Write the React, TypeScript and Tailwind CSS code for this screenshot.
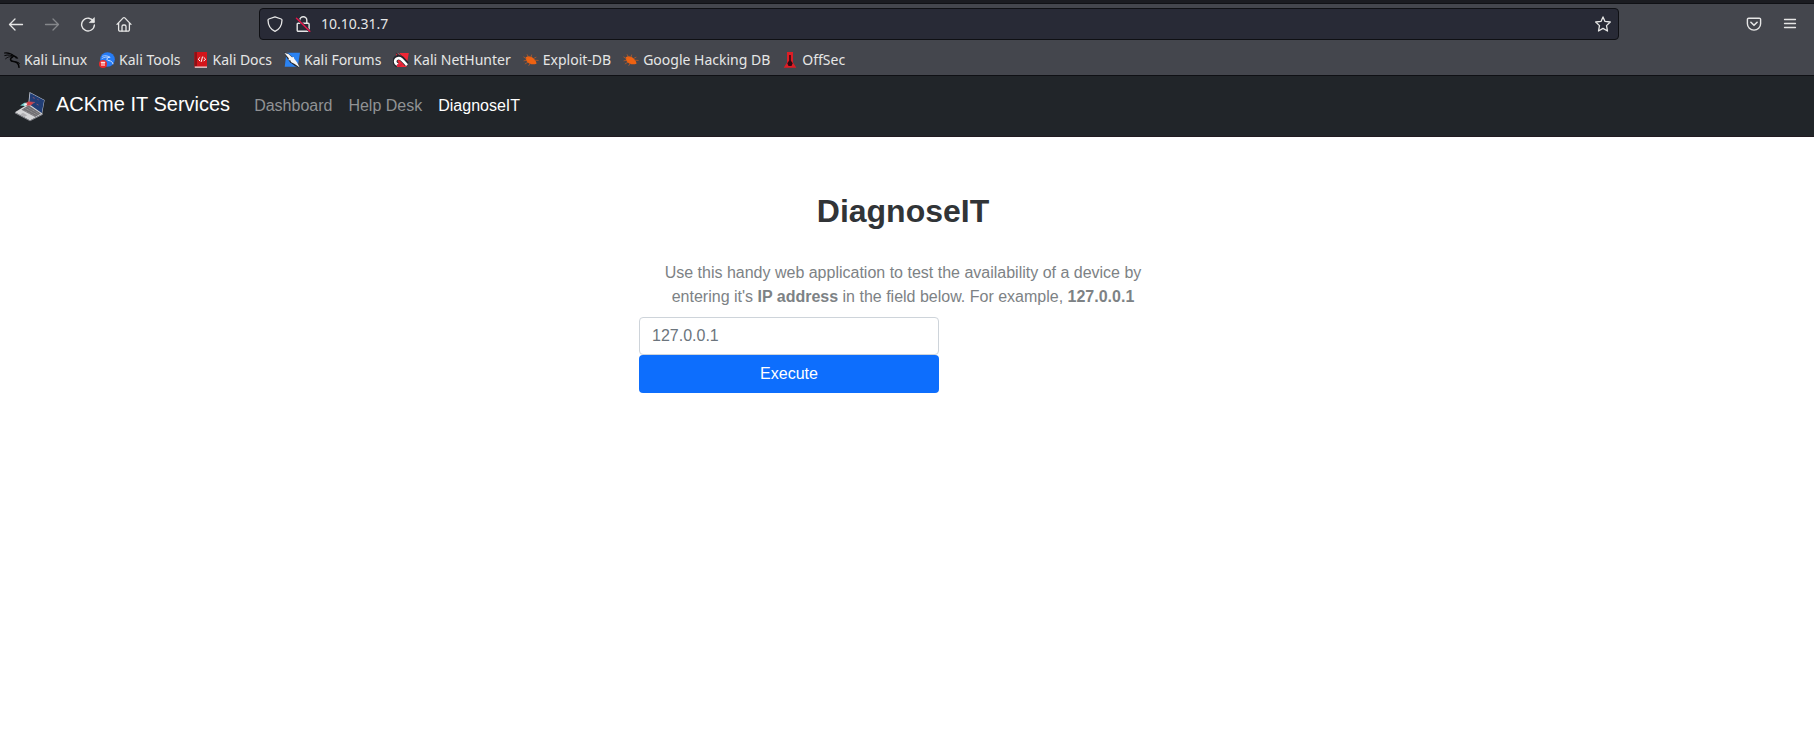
import React from "react";

type IconProps = { className?: string };

const stroke = {
  fill: "none",
  stroke: "currentColor",
  strokeLinecap: "round",
  strokeLinejoin: "round",
} as const;

function BackIcon({ className = "" }: IconProps) {
  return (
    <svg viewBox="0 0 16 16" className={`size-4 ${className}`} {...stroke} strokeWidth="1.3" aria-hidden="true">
      <path d="M14.5 8.5H1.5M7 3 1.5 8.5 7 14" />
    </svg>
  );
}

function ForwardIcon() {
  return <BackIcon className="-scale-x-100" />;
}

function ReloadIcon() {
  return (
    <svg viewBox="0 0 16 16" className="size-4" {...stroke} strokeWidth="1.4" aria-hidden="true">
      <path d="M13.7 5.6A6.4 6.4 0 1 0 14.4 9" />
      <path d="M14.3 2v4.6H9.7z" fill="currentColor" strokeWidth="0.8" />
    </svg>
  );
}

function HomeIcon() {
  return (
    <svg viewBox="0 0 16 16" className="size-4" {...stroke} strokeWidth="1.3" aria-hidden="true">
      <path d="M1 8.4 7.2 1.9a1.1 1.1 0 0 1 1.6 0L15 8.4M2.6 7v6.8a1.4 1.4 0 0 0 1.4 1.4h8a1.4 1.4 0 0 0 1.4-1.4V7" />
      <path d="M6 15V10.5A1.5 1.5 0 0 1 7.5 9h1A1.5 1.5 0 0 1 10 10.5V15" />
    </svg>
  );
}

function ShieldIcon() {
  return (
    <svg viewBox="0 0 16 16" className="size-4" {...stroke} strokeWidth="1.3" aria-hidden="true">
      <path d="M8 .8 14.2 3c.5.2.8.6.8 1.1C14.9 9 12.5 13.5 8 15.3 3.5 13.5 1.1 9 1 4.1 1 3.6 1.3 3.2 1.8 3z" />
    </svg>
  );
}

function InsecureIcon() {
  return (
    <svg viewBox="0 0 16 16" className="size-4" {...stroke} strokeWidth="1.4" aria-hidden="true">
      <path d="M4.8 7V4.2a3.5 3.5 0 0 1 7 0V7M3.2 7.3h9.9a1 1 0 0 1 1 1v6a1 1 0 0 1-1 1H3.200a1 1 0 0 1-1-1v-6a1 1 0 0 1 1-1z" />
      <path d="M1.5 2.2 14.8 15.3" stroke="#282a36" strokeWidth="2.4" />
      <path d="M1.5 2.2 14.8 15.3" stroke="#e3164a" strokeWidth="1.5" />
    </svg>
  );
}

function StarIcon() {
  return (
    <svg viewBox="0 0 16 16" className="size-4" {...stroke} strokeWidth="1.3" aria-hidden="true">
      <path d="M8 .9 10 5.4l5.300.6-3.800 3.600 1 5.400L8 12.400 3.500 15l1-5.400L.7 6 6 5.400z" />
    </svg>
  );
}

function PocketIcon() {
  return (
    <svg viewBox="0 0 16 16" className="size-4" {...stroke} strokeWidth="1.4" aria-hidden="true">
      <path d="M2.7 2.2h10.6a1.3 1.3 0 0 1 1.3 1.3V7.8a6.6 6.3 0 0 1-13.2 0V3.5a1.3 1.3 0 0 1 1.3-1.3z" />
      <path d="M4.900 6.300 8 9.300l3.100-3" strokeWidth="1.6" />
    </svg>
  );
}

function MenuIcon() {
  return (
    <svg viewBox="0 0 16 16" className="size-4" {...stroke} strokeWidth="1.3" aria-hidden="true">
      <path d="M2.500 3.500h11M2.500 7.500h11M2.500 11.500h11" />
    </svg>
  );
}

function KaliLinuxIcon() {
  return (
    <svg viewBox="0 0 16 16" className="size-4" {...stroke} stroke="#050506" aria-hidden="true">
      <path d="M.5 1C4 .6 7.500 1.600 10.500 4.300" strokeWidth="1.100" />
      <path d="M.8 3.500C4 2.400 7.500 3 10.800 4.800" strokeWidth="1" />
      <path d="M1.500 6.800C3.500 4.800 6 4.400 9 4.700" strokeWidth=".8" />
      <path d="M9.800 3.800 12.200 4.600 13.600 6.300 11.600 5.800" fill="#050506" strokeWidth="1" />
      <path d="M8.500 5C5.500 6.600 6 9.300 9.500 9.500 12.500 9.700 14.800 11.500 15 15.300" strokeWidth="1.500" />
      <path d="M12 10.300C14 10 15 10.500 15.700 11.500" strokeWidth=".9" />
    </svg>
  );
}

function KaliToolsIcon() {
  return (
    <svg viewBox="0 0 16 16" className="size-4" aria-hidden="true">
      <circle cx="8.500" cy="7.500" r="7.300" fill="#267bf4" />
      <g {...stroke} stroke="#dce9ff">
        <path d="M3.500 4.200C6 3.200 8.500 3.600 11 5.200M3 6.500C5.500 4.800 8 4.900 10.500 5.400" strokeWidth=".7" />
        <path d="M10 5.200C7 6.300 7.500 8.300 10 8.600c2.200.3 3.600 1.500 4 3.200" strokeWidth="1" />
      </g>
      <circle cx="4" cy="12" r="4" fill="#e9292b" />
      <path d="M1.800 10.300h4.400M3 10.300v3.700M5 10.300v3.700" stroke="#fff" strokeWidth="1" />
    </svg>
  );
}

function KaliDocsIcon() {
  return (
    <svg viewBox="0 0 16 16" className="size-4" aria-hidden="true">
      <path d="M1.500 0H14v15.500H1.500z" fill="#d3151b" />
      <path d="M1.500 0H4v14H1.500z" fill="#8f1116" />
      <path d="M1.800 14.500H14v1.300H1.800z" fill="#e3d9da" />
      <path d="M6.900 5.500 5.200 7.200l1.700 1.700M10.900 5.500l1.700 1.700-1.700 1.700M9.400 5 8.400 9.400" {...stroke} stroke="#fff" strokeWidth="1" />
    </svg>
  );
}

function KaliForumsIcon() {
  return (
    <svg viewBox="0 0 16 16" className="size-4" aria-hidden="true">
      <path d="M2.500.8H16L13.700 14.700H.7z" fill="#2b83f2" />
      <path d="M0 .5 4 1.200 8.500 5.300 13.200 10.800 16 16 11.300 14.200 6 10.300 3 6z" fill="#252a32" />
      <path d="m.4 1 4 1 3.600 3.200 1.800-.3.300 1.700 2.900 3.600 2.700 5.200-5-3.500-3.800-1.800-.3-1.700-2.100-.3.300-1.900z" fill="#f5f5f5" />
    </svg>
  );
}

function NetHunterIcon() {
  return (
    <svg viewBox="0 0 16 16" className="size-4" aria-hidden="true">
      <path d="M3 1H15.800L13.300 15H4z" fill="#ef2735" />
      <path d="M2.500.8 6 1l9 9.500-1 2.500z" fill="#23262d" />
      <path d="M4.500.8 14.500 11" stroke="#f8b9bd" strokeWidth=".6" />
      <path d="M4.500 13C1 11 1 6.500 5 5.500c3-.7 4.800 2 8.800 6.800" fill="none" stroke="#23262d" strokeWidth="5" />
      <path d="M5 12.800C1 11.500 1.400 7 5 6.200c3-.5 4.500 2 9 7" fill="none" stroke="#fff" strokeWidth="2.600" />
      <path d="M4 12.800 6.500 14l3-2.500" fill="none" stroke="#d81f3c" strokeWidth="1.500" />
    </svg>
  );
}

function BugIcon() {
  return (
    <svg viewBox="0 0 16 16" className="size-4" aria-hidden="true">
      <path d="M3 5.200C5 3.600 8 4.500 10.300 6.200c1.900 1.400 3.200 3.400 3.200 5.500-3 1-6.500.8-8.700-1.300C3.200 9 2.300 7.200 3 5.200z" fill="#ee6212" />
      <path d="M5.500 5 4.200 2.700M3.300 6.500.8 5M3.500 8.200 1 8.800M5 10.200l-2.800 1.600M7.300 11.500l-1.500 2M8 5 8.600 3M10.500 6.500l2.500-1.200M12 8.200l3.200.2" {...stroke} stroke="#b95a27" strokeWidth=".8" />
    </svg>
  );
}

function OffSecIcon() {
  return (
    <svg viewBox="0 0 16 16" className="size-4" aria-hidden="true">
      <path d="M5 0h6v10.500l3.300 5.300H1.700L5 10.500z" fill="#dc1d25" />
      <path d="M7.200 3h1.600v5.500l1.900 2.700-1.200 2.900H6.500l-1.200-2.900 1.900-2.700z" fill="#300a12" />
    </svg>
  );
}

function LaptopLogo() {
  return (
    <svg viewBox="0 -1 32 34" className="size-8" aria-hidden="true">
      <path d="M15.500 1 31.500 9.500 28.700 25.300 13.800 17.200z" fill="#c5ccd8" />
      <path d="M16.300 2.300 31 10 28.300 24.500 14.700 16.900z" fill="#213e76" />
      <path d="M0 22.700 14.500 13.500 29.500 24.300 16 31.500z" fill="#d4d4d6" />
      <path d="M7 20 14.500 15.300 27.500 24 21.500 27.700z" fill="#6e6c70" />
      <path d="M9 20.300 22 27M11.300 18.700 24 25.800M13.500 17.200 26 24.600" stroke="#aaa9aa" strokeWidth=".8" strokeDasharray="1 .7" />
      <path d="m5.500 25 3-1.800 4.500 2.700-3.100 1.800z" fill="#b3b2b5" />
      <path d="M0 22.700 16 31.500 29.500 24.300v1L16 32.300 0 23.700z" fill="#8f9096" />
      <path d="M5.500 15.500 10 12.600l4.600-.2 1.200 3-5.300.7z" fill="#78d3d0" />
      <path d="m11 13.300 3-2.200 7.500.6-5 3.800-4.600.2z" fill="#cf4349" />
      <path d="m10.500 13.200 2.700.1-.7 2-3 .1z" fill="#eef4f5" />
      <path d="m18 12.600 2.800-.4M19 7l2 .8M23 14l2 1M24 9l1 .5" stroke="#96536f" strokeWidth="1" />
    </svg>
  );
}

const bookmarks = [
  { label: "Kali Linux", Icon: KaliLinuxIcon },
  { label: "Kali Tools", Icon: KaliToolsIcon },
  { label: "Kali Docs", Icon: KaliDocsIcon },
  { label: "Kali Forums", Icon: KaliForumsIcon },
  { label: "Kali NetHunter", Icon: NetHunterIcon },
  { label: "Exploit-DB", Icon: BugIcon },
  { label: "Google Hacking DB", Icon: BugIcon },
  { label: "OffSec", Icon: OffSecIcon },
];

function BrowserChrome() {
  return (
    <header className="border-b border-[#0f1014] bg-[#44464d] font-['Noto_Sans',sans-serif] text-[#e6e6e6]">
      <div className="h-1 border-b border-[#101115] bg-[#1b1c21]" />
      <div className="flex h-10 items-center">
        <div className="flex w-[259px] shrink-0 items-center gap-5 pl-2">
          <button type="button" aria-label="Back"><BackIcon /></button>
          <button type="button" aria-label="Forward" disabled className="text-[#85878b]"><ForwardIcon /></button>
          <button type="button" aria-label="Reload"><ReloadIcon /></button>
          <button type="button" aria-label="Home"><HomeIcon /></button>
        </div>
        <div className="flex h-8 grow items-center rounded-sm border border-[#0f1014] bg-[#282a36] px-[7px]">
          <ShieldIcon />
          <span className="ml-3"><InsecureIcon /></span>
          <input
            type="text"
            aria-label="Address"
            defaultValue="10.10.31.7"
            className="ml-2.5 min-w-0 grow bg-transparent text-sm outline-none"
          />
          <button type="button" aria-label="Bookmark this page"><StarIcon /></button>
        </div>
        <div className="flex w-[195px] shrink-0 items-center justify-end gap-5 pr-4">
          <button type="button" aria-label="Save to Pocket"><PocketIcon /></button>
          <button type="button" aria-label="Menu"><MenuIcon /></button>
        </div>
      </div>
      <nav aria-label="Bookmarks" className="flex h-[31px] items-center gap-3 px-1 text-sm">
        {bookmarks.map(({ label, Icon }) => (
          <a key={label} href="#" className="flex items-center gap-1 whitespace-nowrap">
            <Icon />
            {label}
          </a>
        ))}
      </nav>
    </header>
  );
}

function SiteNav() {
  return (
    <nav aria-label="Main" className="flex items-center border-b border-[#211a20] bg-[#212529] px-3.5 py-3 text-base">
      <a href="#" className="flex items-center gap-2.5 text-xl leading-8 text-white">
        <LaptopLogo />
        <span className="pb-1">ACKme IT Services</span>
      </a>
      <div className="ml-4 flex items-center text-[#909294]">
        <a href="#" className="px-2">Dashboard</a>
        <a href="#" className="px-2">Help Desk</a>
        <a href="#" aria-current="page" className="px-2 text-white">DiagnoseIT</a>
      </div>
    </nav>
  );
}

export default function App() {
  return (
    <div className="min-h-screen bg-white font-['Liberation_Sans',Arial,sans-serif]">
      <BrowserChrome />
      <SiteNav />
      <main className="flex justify-center px-4 pt-14 pr-6">
        <div className="w-full max-w-[528px]">
          <h1 className="text-center text-[32px] leading-9 font-bold text-[#313437]">DiagnoseIT</h1>
          <p className="mt-8 px-5 text-center text-base text-[#7d8285]">
            Use this handy web application to test the availability of a device by
            <br />
            entering it's <b>IP address</b> in the field below. For example, <b>127.0.0.1</b>
          </p>
          <form className="mt-2 w-[300px]" onSubmit={(e) => e.preventDefault()}>
            <input
              type="text"
              aria-label="IP address"
              placeholder="127.0.0.1"
              className="block h-[38px] w-full rounded border border-[#ced4da] px-3 text-base text-[#212529] outline-none placeholder:text-[#6c757d]"
            />
            <button type="submit" className="block h-[38px] w-full rounded bg-[#0d6efd] text-base text-white">
              Execute
            </button>
          </form>
        </div>
      </main>
    </div>
  );
}
